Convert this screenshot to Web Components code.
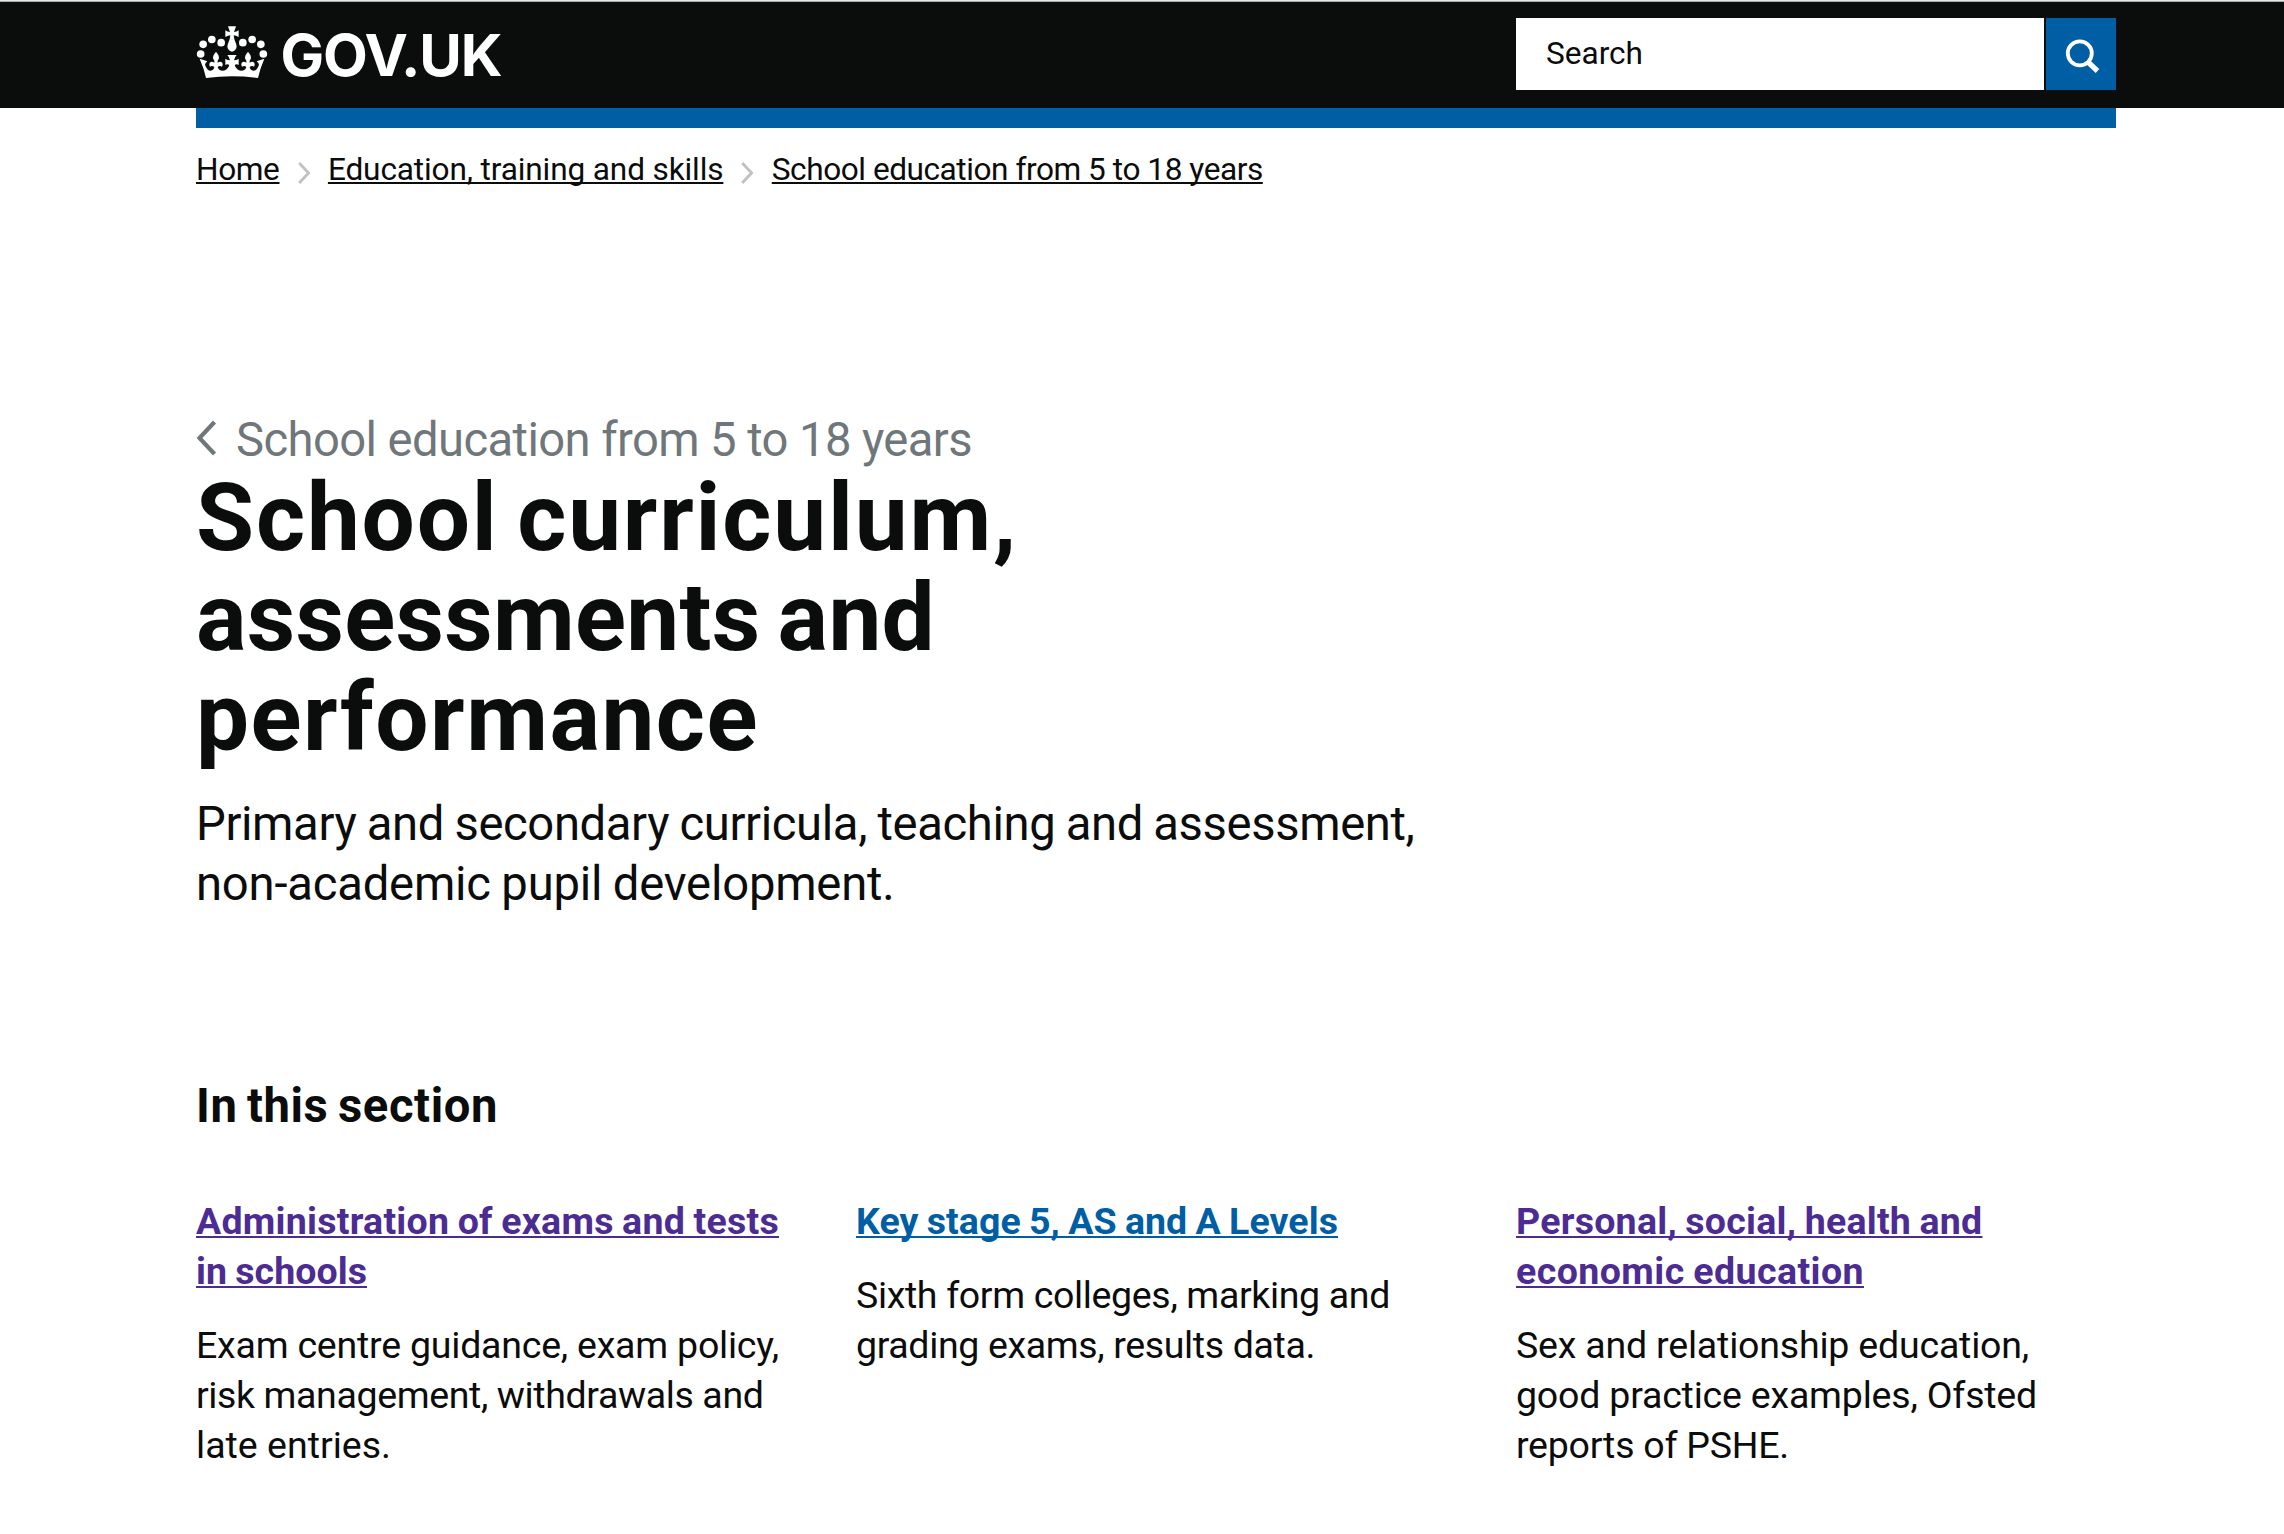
<!DOCTYPE html>
<html lang="en">
<head>
<meta charset="utf-8">
<title>School curriculum, assessments and performance - GOV.UK</title>
<style>
body { margin: 0; background: #fff; color: #0b0c0c; font-family: Roboto, "Liberation Sans", sans-serif; overflow: hidden; }
</style>
</head>
<body>
<gov-header></gov-header>
<gov-main>
  <gov-breadcrumbs>
    <text-line slot="first" width="83.5" link>Home</text-line>
    <text-line slot="second" width="395.5" link>Education, training and skills</text-line>
    <text-line slot="third" width="491" link>School education from 5 to 18 years</text-line>
  </gov-breadcrumbs>
  <gov-title>
    <text-line slot="parent" width="736">School education from 5 to 18 years</text-line>
    <text-line width="822">School curriculum,</text-line>
    <text-line width="739">assessments and</text-line>
    <text-line width="563">performance</text-line>
    <text-line slot="lead" width="1218.5">Primary and secondary curricula, teaching and assessment,</text-line>
    <text-line slot="lead" width="698.5">non-academic pupil development.</text-line>
  </gov-title>
  <gov-section>
    <text-line slot="heading" width="302">In this section</text-line>
    <gov-topic visited>
      <text-line slot="link" width="583" link>Administration of exams and tests</text-line>
      <text-line slot="link" width="171" link>in schools</text-line>
      <text-line width="583">Exam centre guidance, exam policy,</text-line>
      <text-line width="567.5">risk management, withdrawals and</text-line>
      <text-line width="195">late entries.</text-line>
    </gov-topic>
    <gov-topic>
      <text-line slot="link" width="482" link>Key stage 5, AS and A Levels</text-line>
      <text-line width="534">Sixth form colleges, marking and</text-line>
      <text-line width="459">grading exams, results data.</text-line>
    </gov-topic>
    <gov-topic visited>
      <text-line slot="link" width="466.5" link>Personal, social, health and</text-line>
      <text-line slot="link" width="348" link>economic education</text-line>
      <text-line width="513">Sex and relationship education,</text-line>
      <text-line width="521">good practice examples, Ofsted</text-line>
      <text-line width="273">reports of PSHE.</text-line>
    </gov-topic>
  </gov-section>
</gov-main>
<script>
class BaseElement extends HTMLElement {
  connectedCallback() {
    if (!this.shadowRoot) this.attachShadow({ mode: 'open' }).innerHTML = this.constructor.markup;
  }
}

customElements.define('gov-crown', class extends BaseElement {
  static markup = `<style>:host{display:block;width:72px;height:64px}svg{display:block}</style>
  <svg width="72" height="64" viewBox="12 0 216 192" fill="#fff">
    <circle cx="33.500" cy="73" r="11.500"/><circle cx="59.500" cy="58.500" r="11.500"/><circle cx="87.500" cy="68" r="11.500"/><circle cx="26" cy="102" r="11.500"/>
    <circle cx="206.500" cy="73" r="11.500"/><circle cx="180.500" cy="58.500" r="11.500"/><circle cx="152.500" cy="68" r="11.500"/><circle cx="214" cy="102" r="11.500"/>
    <path d="M108 19H132L126 36Q134 36 140 31V51Q132 46 125 46Q126 57 130 66Q134 73 134 80Q132 92 120 95Q108 92 106 80Q106 73 110 66Q114 57 115 46Q108 46 100 51V31Q106 36 114 36Z"/>
    <path d="M23 116L46 124Q40 128 39 134Q45 152 56 152Q66 150 67 141Q60 135 54 140Q49 130 56 126Q61 124 67 128Q68 121 64 117Q60 108 72 95Q84 108 80 117Q76 121 77 128Q83 124 88 126Q95 130 90 140Q83 135 77 141Q79 152 93 152Q107 151 112 135Q106 130 100 135V116Q106 121 114 121Q112 111 106 105H134Q128 111 126 121Q134 121 140 116V135Q134 130 128 135Q133 151 147 152Q161 152 163 141Q157 135 150 140Q145 130 152 126Q157 124 163 128Q164 121 160 117Q156 108 168 95Q180 108 176 117Q172 121 173 128Q179 124 184 126Q191 130 186 140Q180 135 173 141Q174 150 184 152Q195 152 201 134Q200 128 194 124L217 116Q204 146 198 174Q158 169 120 169Q82 169 42 174Q36 146 23 116Z"/>
  </svg>`;
});

customElements.define('gov-search', class extends BaseElement {
  static markup = `<style>
    :host{display:flex;gap:2px;width:600px;height:72px}
    .field{width:528px;box-sizing:border-box;padding:0 30px;background:#fff;color:#0b0c0c;font-size:31.6px;line-height:71px}
    .button{flex:1;background:#005ea5}
    svg{display:block}
  </style>
  <div class="field"><text-line width="97">Search</text-line></div>
  <div class="button"><svg width="70" height="72" viewBox="0 0 70 72" fill="none" stroke="#fff"><circle cx="33.800" cy="35.300" r="12" stroke-width="3.800"/><path d="M42 44L51.500 53" stroke-width="5.200"/></svg></div>`;
});

customElements.define('gov-header', class extends BaseElement {
  static markup = `<style>
    :host{display:block}
    .top{border-top:1px solid #e4e6e7;background:#0b0c0c;box-shadow:inset 0 1px #a9abac;height:107px}
    .wrap{width:1920px;margin-left:196px;display:flex;justify-content:space-between}
    .logo{display:flex;gap:12.5px;padding-top:19px}
    .name{margin-top:-1px;font:700 58.200px/72px Inter,Roboto,sans-serif;color:#fff}
    gov-search{margin-top:17px}
    .bar{height:20px;width:1920px;margin-left:196px;background:#005ea5}
  </style>
  <div class="top"><div class="wrap">
    <div class="logo"><gov-crown></gov-crown><div class="name"><text-line width="221">GOV.UK</text-line></div></div>
    <gov-search></gov-search>
  </div></div>
  <div class="bar"></div>`;
});

customElements.define('gov-main', class extends BaseElement {
  static markup = `<style>:host{display:block;width:1920px;padding:21px 0 0 196px}</style><slot></slot>`;
});

customElements.define('crumb-arrow', class extends BaseElement {
  static markup = `<style>:host{display:block;flex:none;padding:13px 18px 0}svg{display:block}</style>
  <svg width="12.400" height="22" viewBox="0 0 12.400 22" fill="none" stroke="#bfc1c3" stroke-width="2.900"><path d="M1.200 1L10.600 11L1.200 21"/></svg>`;
});

customElements.define('gov-breadcrumbs', class extends BaseElement {
  static markup = `<style>:host{display:flex;font-size:31.6px;line-height:41px;height:40px}</style>
  <slot name="first"></slot><crumb-arrow></crumb-arrow><slot name="second"></slot><crumb-arrow></crumb-arrow><slot name="third"></slot>`;
});

customElements.define('gov-title', class extends BaseElement {
  static markup = `<style>
    :host{display:block;padding-top:223px}
    .parent{display:flex;gap:19px;color:#6f777b;font-size:47.2px;line-height:56px}
    .parent svg{margin-top:8px;flex:none}
    h1{margin:0;font-size:94.4px;line-height:100px;font-weight:700;word-spacing:-.07em}
    .lead{margin-top:26px;font-size:47.2px;line-height:60px;word-spacing:-.02em}
  </style>
  <div class="parent"><svg width="21" height="36" viewBox="0 0 21 36" fill="none" stroke="#6f777b" stroke-width="4.200"><path d="M18.500 2L3.500 18L18.500 34"/></svg><slot name="parent"></slot></div>
  <h1><slot></slot></h1>
  <div class="lead"><slot name="lead"></slot></div>`;
});

customElements.define('gov-section', class extends BaseElement {
  static markup = `<style>
    :host{display:block;padding-top:162px}
    h2{margin:0 0 60px;font-size:47.2px;line-height:60px;font-weight:700;word-spacing:-.06em}
    .columns{display:grid;grid-template-columns:600px 600px 600px;column-gap:60px}
  </style>
  <h2><slot name="heading"></slot></h2>
  <div class="columns"><slot></slot></div>`;
});

customElements.define('gov-topic', class extends BaseElement {
  static markup = `<style>
    :host{display:block;font-size:37.5px;line-height:50px;--link:#005ea5}
    :host([visited]){--link:#4c2c92}
    .link{color:var(--link);font-weight:700;margin-bottom:24px;word-spacing:-.03em}
  </style>
  <div class="link"><slot name="link"></slot></div>
  <div><slot></slot></div>`;
});

/* One line of copy, tracked so that it fills the given measure. */
customElements.define('text-line', class extends BaseElement {
  static markup = `<style>
    :host{display:block;white-space:nowrap}
    :host([link]) span{text-decoration:underline 2px;text-underline-offset:2px;text-decoration-skip-ink:none}
  </style><span><slot></slot></span>`;
  connectedCallback() {
    super.connectedCallback();
    requestAnimationFrame(() => this.fit());
    this.fit();
  }
  fit() {
    const span = this.shadowRoot.querySelector('span');
    span.style.letterSpacing = '0';
    const spare = this.getAttribute('width') - span.getBoundingClientRect().width;
    span.style.letterSpacing = spare / this.textContent.trim().length + 'px';
  }
});
</script>
</body>
</html>
